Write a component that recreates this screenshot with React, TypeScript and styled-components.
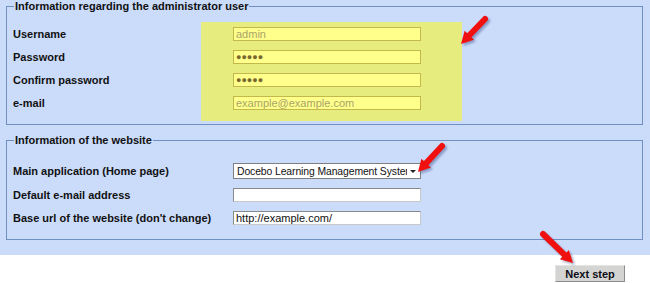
import React from 'react';
import styled, { createGlobalStyle } from 'styled-components';

const GlobalStyle = createGlobalStyle`
  html, body {
    margin: 0;
    padding: 0;
    background: #fff;
  }
  body {
    font-family: "Liberation Sans", Arial, sans-serif;
    font-size: 11px;
    color: #000;
  }
`;

const Page = styled.div`
  position: relative;
  width: 650px;
  height: 283px;
  overflow: hidden;
`;

const Panel = styled.div`
  background-color: #cbdcfb;
  padding: 0 7px 15px 6px;
  display: flex;
  flex-direction: column;
  gap: 9px;
`;

const Fieldset = styled.fieldset`
  margin: 0;
  padding: 0;
  border: 1px solid #7090c4;
  min-width: 0;
`;

const Legend = styled.legend`
  margin-left: 7px;
  padding: 0 1px;
  font-weight: bold;
  font-size: 11px;
  line-height: 13px;
  color: #111;
`;

const Columns = styled.div`
  display: flex;
  margin-top: 9px;
  padding: 0 0 3px 6px;
`;

const LabelStack = styled.div`
  width: 188px;
  display: flex;
  flex-direction: column;
  gap: 9px;
  padding-top: 5px;
`;

const Label = styled.div<{ $h?: number }>`
  height: ${p => p.$h ?? 14}px;
  display: flex;
  align-items: center;
  font-weight: bold;
  font-size: 11px;
  color: #111;
  white-space: nowrap;
`;

const Highlight = styled.div`
  width: 261px;
  background-color: #e7ec7e;
  display: flex;
  flex-direction: column;
  gap: 9px;
  padding: 5px 0 11px 32px;
  box-sizing: border-box;
`;

const YellowInput = styled.input<{ $dark?: boolean }>`
  width: 188px;
  height: 14px;
  box-sizing: border-box;
  margin: 0;
  padding: 0 2px;
  border: 1px solid #c2b84c;
  background-color: #ffff8c;
  font-family: "Liberation Sans", Arial, sans-serif;
  font-size: ${p => (p.$dark ? '9px' : '11px')};
  color: ${p => (p.$dark ? '#7a6630' : '#a9a46a')};
  outline: none;
`;

const Grid = styled.div`
  display: grid;
  grid-template-columns: 220px 188px;
  row-gap: 9px;
  align-items: center;
  margin-top: 16px;
  padding: 0 0 14px 6px;
`;

const WhiteInput = styled.input`
  width: 188px;
  height: 14px;
  box-sizing: border-box;
  margin: 0;
  padding: 0 2px;
  border: 1px solid #8a8a8a;
  border-right-color: #c8c8c8;
  border-bottom-color: #c8c8c8;
  background-color: #fff;
  font-family: "Liberation Sans", Arial, sans-serif;
  font-size: 11px;
  color: #111;
  outline: none;
`;

const SelectBox = styled.div`
  width: 188px;
  height: 16px;
  box-sizing: border-box;
  border: 1px solid #7f7f7f;
  background: #fff;
  display: flex;
  align-items: center;
  padding: 0 3px;
  gap: 3px;
`;

const SelectText = styled.span`
  flex: 1;
  overflow: hidden;
  white-space: nowrap;
  font-size: 10.4px;
  letter-spacing: -0.1px;
  color: #111;
`;

const Caret = styled.span`
  width: 0;
  height: 0;
  margin-right: 1px;
  border-left: 3px solid transparent;
  border-right: 3px solid transparent;
  border-top: 3px solid #222;
`;

const Footer = styled.div`
  display: flex;
  justify-content: flex-end;
  padding: 10px 25px 0 0;
`;

const NextButton = styled.button`
  width: 70px;
  height: 17px;
  margin: 0;
  padding: 0;
  border: 1px solid #8c8c8c;
  border-top-color: #e4e4e4;
  border-left-color: #e4e4e4;
  background-color: #d4d5d2;
  font-family: "Liberation Sans", Arial, sans-serif;
  font-weight: bold;
  font-size: 11px;
  color: #0c0c18;
`;

const Overlay = styled.svg`
  position: absolute;
  left: 0;
  top: 0;
  pointer-events: none;
`;

type ArrowProps = { x1: number; y1: number; x2: number; y2: number };

const Arrow: React.FC<ArrowProps> = ({ x1, y1, x2, y2 }) => {
  const dx = x2 - x1;
  const dy = y2 - y1;
  const len = Math.hypot(dx, dy);
  const ux = dx / len;
  const uy = dy / len;
  const headLen = 12;
  const half = 6.5;
  const bx = x2 - ux * headLen;
  const by = y2 - uy * headLen;
  const head = `${x2},${y2} ${bx - uy * half},${by + ux * half} ${bx + uy * half},${by - ux * half}`;
  const shaftEnd = { x: bx + ux * 2, y: by + uy * 2 };
  return (
    <g>
      <g transform="translate(2,2)" opacity={0.35} filter="url(#arrowBlur)">
        <line x1={x1} y1={y1} x2={shaftEnd.x} y2={shaftEnd.y} stroke="#102060" strokeWidth={6} strokeLinecap="round" />
        <polygon points={head} fill="#102060" />
      </g>
      <line x1={x1} y1={y1} x2={shaftEnd.x} y2={shaftEnd.y} stroke="#f01010" strokeWidth={6} strokeLinecap="round" />
      <polygon points={head} fill="#f01010" />
    </g>
  );
};

const App: React.FC = () => {
  return (
    <Page>
      <GlobalStyle />
      <Panel>
        <Fieldset>
          <Legend>Information regarding the administrator user</Legend>
          <Columns>
            <LabelStack>
              <Label>Username</Label>
              <Label>Password</Label>
              <Label>Confirm password</Label>
              <Label>e-mail</Label>
            </LabelStack>
            <Highlight>
              <YellowInput readOnly value="admin" />
              <YellowInput readOnly $dark value="●●●●●" />
              <YellowInput readOnly $dark value="●●●●●" />
              <YellowInput readOnly value="example@example.com" />
            </Highlight>
          </Columns>
        </Fieldset>

        <Fieldset>
          <Legend>Information of the website</Legend>
          <Grid>
            <Label $h={16}>Main application (Home page)</Label>
            <SelectBox>
              <SelectText>Docebo Learning Management System</SelectText>
              <Caret />
            </SelectBox>
            <Label>Default e-mail address</Label>
            <WhiteInput readOnly value="" />
            <Label>Base url of the website (don't change)</Label>
            <WhiteInput readOnly value="http://example.com/" />
          </Grid>
        </Fieldset>
      </Panel>

      <Footer>
        <NextButton>Next step</NextButton>
      </Footer>

      <Overlay width={650} height={283}>
        <defs>
          <filter id="arrowBlur" x="-20%" y="-20%" width="140%" height="140%">
            <feGaussianBlur stdDeviation="1" />
          </filter>
        </defs>
        <Arrow x1={485} y1={19} x2={461} y2={44} />
        <Arrow x1={442} y1={146} x2={418} y2={172} />
        <Arrow x1={543} y1={234} x2={573} y2={263} />
      </Overlay>
    </Page>
  );
};

export default App;
